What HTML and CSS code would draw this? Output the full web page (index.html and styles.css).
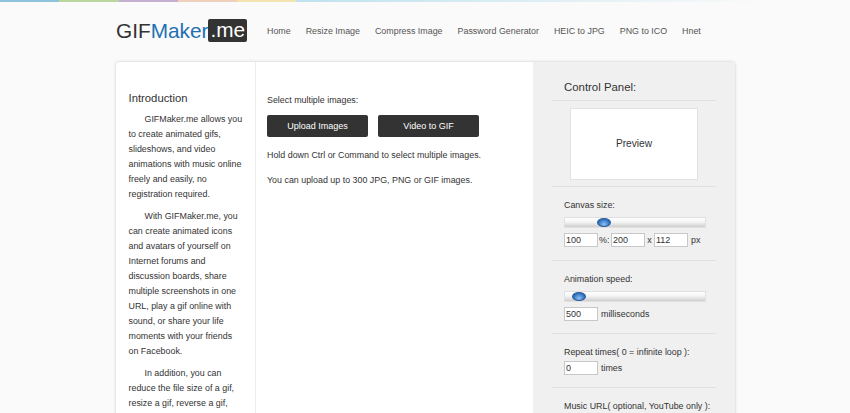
FILE: index.html
```html
<!DOCTYPE html>
<html lang="en">
<head>
<meta charset="utf-8">
<title>GIFMaker.me</title>
<link rel="stylesheet" href="styles.css">
</head>
<body>
<div class="rainbow">
  <i class="c1"></i><i class="c2"></i><i class="c3"></i><i class="c4"></i><i class="c5"></i><i class="c6"></i>
</div>
<div class="wrap">
  <header class="header">
    <a class="logo"><span class="gif">GIF</span><span class="maker">Maker</span><span class="me">.me</span></a>
    <nav class="nav">
      <a>Home</a><a>Resize Image</a><a>Compress Image</a><a>Password Generator</a><a>HEIC to JPG</a><a>PNG to ICO</a><a>Hnet</a>
    </nav>
  </header>
  <main class="card">
    <aside class="intro">
      <h2>Introduction</h2>
      <p>GIFMaker.me allows you to create animated gifs, slideshows, and video animations with music online freely and easily, no registration required.</p>
      <p>With GIFMaker.me, you can create animated icons and avatars of yourself on Internet forums and discussion boards, share multiple screenshots in one URL, play a gif online with sound, or share your life moments with your friends on Facebook.</p>
      <p>In addition, you can reduce the file size of a gif, resize a gif, reverse a gif,</p>
    </aside>
    <section class="center">
      <p class="first">Select multiple images:</p>
      <div class="buttons">
        <button class="btn">Upload Images</button>
        <button class="btn">Video to GIF</button>
      </div>
      <p>Hold down Ctrl or Command to select multiple images.</p>
      <p>You can upload up to 300 JPG, PNG or GIF images.</p>
    </section>
    <section class="panel">
      <h2>Control Panel:</h2>
      <div class="block preview-block">
        <div class="preview">Preview</div>
      </div>
      <div class="block canvas-block">
        <div class="label">Canvas size:</div>
        <div class="slider"><span class="knob knob-canvas"></span></div>
        <div class="row">
          <input class="field" value="100"><span class="pct">%:</span><input class="field" value="200"><span class="x">x</span><input class="field" value="112"><span class="px">px</span>
        </div>
      </div>
      <div class="block">
        <div class="label">Animation speed:</div>
        <div class="slider"><span class="knob knob-speed"></span></div>
        <div class="row">
          <input class="field" value="500"><span class="px">milliseconds</span>
        </div>
      </div>
      <div class="block tight">
        <div class="label">Repeat times( 0 = infinite loop ):</div>
        <div class="row">
          <input class="field" value="0"><span class="px">times</span>
        </div>
      </div>
      <div class="block tight">
        <div class="label">Music URL( optional, YouTube only ):</div>
      </div>
    </section>
  </main>
</div>
</body>
</html>
```
FILE: styles.css
```css
* { box-sizing: border-box; }
html, body { height: 100%; overflow: hidden; }
body {
  margin: 0;
  background: #fafafa;
  color: #333;
  font-family: "Liberation Sans", Arial, sans-serif;
  font-size: 8.9px;
}
.rainbow { display: flex; height: 2px; }
.rainbow i { width: 59.3px; }
.c1 { background: #8cc3da; }
.c2 { background: #b9d79f; }
.c3 { background: #c5b0d2; }
.c4 { background: #eed0bd; }
.c5 { background: #f3e3ae; }
.rainbow .c6 { flex: 1; background: linear-gradient(90deg, #bfe2ee, #fafafa 85%); }

.wrap { width: 619px; margin: 0 0 0 116px; }
.header { display: flex; align-items: center; height: 60px; }
.logo { display: flex; align-items: center; font-size: 20.8px; width: 151px; flex: none; line-height: 24px; margin-top: -3px; }
.gif { color: #333; }
.maker { color: #1f6fb2; }
.me { background: #333; color: #fff; border-radius: 2px; padding: 0 2px; height: 23px; line-height: 21px; }
.nav { display: flex; gap: 15px; font-size: 8.9px; color: #555; margin-top: -3px; white-space: nowrap; }

.card {
  display: flex;
  background: #fff;
  height: 420px;
  border-radius: 3px;
  box-shadow: 0 0 3px rgba(0,0,0,.22);
  overflow: hidden;
}
.intro { flex: none; width: 140px; padding: 29px 12px 0 12.5px; border-right: 1px solid #eee; line-height: 15.1px; }
.intro h2 { font-size: 11.3px; font-weight: 400; margin: 0 0 6px; line-height: 15px; }
.intro p { margin: 0 0 6px; text-indent: 16px; }
.center { flex: none; width: 277px; padding: 31px 12px 0 11px; }
.center p { margin: 0 0 9.5px; line-height: 15px; }
.center .first { margin-bottom: 7px; }
.buttons { display: flex; gap: 10px; margin-bottom: 11px; }
.btn {
  width: 101px; height: 22px; padding: 0; border: 0; border-radius: 2px;
  background: #333; color: #fff; font: 9px "Liberation Sans", Arial, sans-serif;
}
.panel { flex: none; width: 202px; background: #f0f0f0; padding: 0 19px; }
.panel h2 { font-size: 11.4px; font-weight: 400; line-height: 15px; margin: 0; padding: 18px 0 4px 12px; height: 39px; border-bottom: 1px solid #e0e0e0; }
.block { padding: 11px 0 12px 12px; border-bottom: 1px solid #e0e0e0; }
.block.canvas-block { padding-bottom: 13px; }
.block.preview-block { padding: 7px 0 6px 18px; }
.preview { width: 128px; height: 72px; padding-bottom: 2px; background: #fff; border: 1px solid #e2e2e2; font-size: 10.2px; display: flex; align-items: center; justify-content: center; }
.label { line-height: 14px; margin-bottom: 5px; white-space: nowrap; }
.slider {
  position: relative; height: 11px; width: 142px; margin: 0 0 5px;
  border: 1px solid #e0e0e0;
  background: linear-gradient(#fff, #f4f4f4 45%, #cfcfcf);
}
.knob {
  position: absolute; top: 0; width: 14px; height: 9px; border-radius: 50%;
  background: radial-gradient(ellipse at 50% 75%, #8fc0f0, #2f72c0 65%, #2159a4);
  border: 1px solid #2a5b9c;
}
.knob-canvas { left: 32px; }
.knob-speed { left: 7px; }
.row { display: flex; align-items: center; height: 14px; }
.field {
  width: 34px; height: 14px; padding: 0 1px; border: 1px solid #c8c8c8; background: #fff; flex: none;
  font: 9px "Liberation Sans", Arial, sans-serif; color: #333; border-radius: 0; outline: 0;
}
.pct { width: 13px; padding-left: 1px; }
.x { width: 9px; text-align: center; }
.px { margin-left: 3px; }
.tight .label { margin-bottom: 2px; }
```
